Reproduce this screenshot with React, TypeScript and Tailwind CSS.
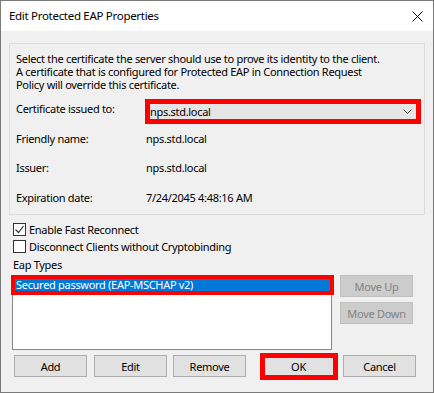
import React from 'react';

function Btn({ label, disabled, className = '' }: { label: string; disabled?: boolean; className?: string }) {
  return (
    <div
      className={`flex h-[22px] w-[73px] items-center justify-center border leading-[13px] ${
        disabled ? 'border-[#bfbfbf] bg-[#cccccc] text-[#838383]' : 'border-[#adadad] bg-[#e1e1e1] text-black'
      } ${className}`}
    >
      {label}
    </div>
  );
}

function Check({ checked, label, className = '' }: { checked?: boolean; label: string; className?: string }) {
  return (
    <div className={`ml-[12px] flex h-[13px] items-center ${className}`}>
      <div className="relative h-[13px] w-[13px] border border-[#333333] bg-white">
        {checked && (
          <svg className="absolute left-0 top-0" width="11" height="11" viewBox="0 0 11 11">
            <path d="M1.5 5.5 L4.5 8.5 L9.5 2" fill="none" stroke="#333" strokeWidth="1.2" />
          </svg>
        )}
      </div>
      <span className="ml-[3px] leading-[13px]">{label}</span>
    </div>
  );
}

export default function App() {
  return (
    <div className="flex h-[393px] w-[434px] flex-col whitespace-nowrap border border-[#7a7a7a] font-['Segoe_UI','Noto_Sans',sans-serif] text-[11px] tracking-[-0.3px] text-black">
      <div className="flex h-[30px] items-center justify-between bg-white pl-[8px] pr-[10px]">
        <span className="text-[11.5px] leading-[16px]">Edit Protected EAP Properties</span>
        <svg width="11" height="11" viewBox="0 0 11 11">
          <path d="M0.5 0.5 L10.5 10.5 M10.5 0.5 L0.5 10.5" stroke="#111" strokeWidth="1" />
        </svg>
      </div>

      <div className="flex-1 bg-[#f0f0f0]">
        <div className="mx-[8px] mt-[12px] h-[172px] border border-[#dcdcdc] pl-[6px]">
          <p className="mt-[8px] leading-[13px]">
            Select the certificate the server should use to prove its identity to the client.
            <br />
            A certificate that is configured for Protected EAP in Connection Request
            <br />
            Policy will override this certificate.
          </p>

          <div className="mt-[10px] flex items-start">
            <span className="w-[131px] pt-[1px] leading-[13px]">Certificate issued to:</span>
            <div className="relative flex h-[21px] w-[272px] items-center justify-between border border-[#adadad] bg-[#e5e5e5] pl-[2px] pr-[6px]">
              <span className="leading-[13px]">nps.std.local</span>
              <svg width="9" height="5" viewBox="0 0 9 5">
                <path d="M0.5 0.5 L4.5 4.5 L8.5 0.5" fill="none" stroke="#444" strokeWidth="1" />
              </svg>
              <div className="absolute -bottom-[3px] -left-[3px] -right-[3px] -top-[3px] border-[5px] border-[#ff0000]" />
            </div>
          </div>

          <div className="mt-[10px] flex leading-[13px]">
            <span className="w-[130px]">Friendly name:</span>
            <span>nps.std.local</span>
          </div>
          <div className="mt-[16px] flex leading-[13px]">
            <span className="w-[130px]">Issuer:</span>
            <span>nps.std.local</span>
          </div>
          <div className="mt-[17px] flex leading-[13px]">
            <span className="w-[130px]">Expiration date:</span>
            <span>7/24/2045 4:48:16 AM</span>
          </div>
        </div>

        <Check checked label="Enable Fast Reconnect" className="mt-[8px]" />
        <Check label="Disconnect Clients without Cryptobinding" className="mt-[4px]" />
        <div className="ml-[12px] mt-[5px] leading-[13px]">Eap Types</div>

        <div className="mt-[4px] flex items-start">
          <div className="relative ml-[11px] mt-[1px] h-[74px] w-[320px] border border-[#828790] bg-white">
            <div className="ml-[2px] mr-[1px] mt-[1px] h-[13px] bg-[#0078d7] pl-[1px] leading-[13px] text-white">
              Secured password (EAP-MSCHAP v2)
            </div>
            <div className="absolute -left-[2px] -top-[2px] h-[20px] w-[323px] border-4 border-[#ff0000]" />
          </div>
          <div className="ml-[8px] flex flex-col gap-[5px]">
            <Btn label="Move Up" disabled />
            <Btn label="Move Down" disabled />
          </div>
        </div>

        <div className="ml-[13px] mt-[5px] flex">
          <Btn label="Add" />
          <Btn label="Edit" className="ml-[7px]" />
          <Btn label="Remove" className="ml-[6px]" />
          <div className="relative ml-[16px]">
            <Btn label="OK" />
            <div className="absolute -bottom-[3px] -left-[2px] -right-[3px] -top-[2px] border-[5px] border-[#ff0000]" />
          </div>
          <Btn label="Cancel" className="ml-[8px]" />
        </div>
      </div>
    </div>
  );
}
